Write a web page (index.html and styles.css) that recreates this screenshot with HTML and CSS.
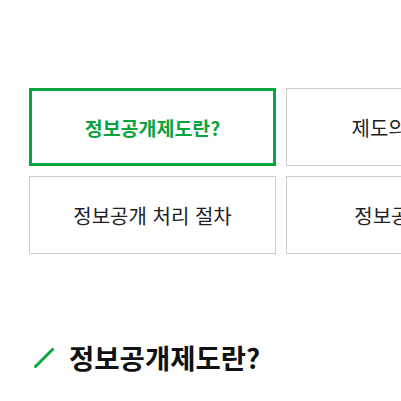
FILE: index.html
```html
<!DOCTYPE html>
<html lang="ko">
<head>
<meta charset="utf-8">
<link rel="stylesheet" href="styles.css">
</head>
<body>
<div class="page">
  <ul class="tabs">
    <li class="tab active">정보공개제도란?</li>
    <li class="tab">제도의 필요성</li>
    <li class="tab">정보공개 처리 절차</li>
    <li class="tab">정보공개청구</li>
  </ul>
  <h2 class="title">
    <svg class="slash" width="20" height="20" viewBox="0 0 20 20"><line x1="1.5" y1="18.5" x2="18.5" y2="1.5" stroke="#0aa43f" stroke-width="3" stroke-linecap="round"/></svg>
    <span>정보공개제도란?</span>
  </h2>
</div>
</body>
</html>
```
FILE: styles.css
```css
html, body {
  margin: 0;
  padding: 0;
  overflow: hidden;
  background: #fff;
}
.page {
  padding: 88px 0 0 29px;
  width: 800px;
  font-family: "Noto Sans CJK KR", "Noto Sans", sans-serif;
}
.tabs {
  list-style: none;
  margin: 0;
  padding: 0;
  display: grid;
  grid-template-columns: 247px 247px;
  grid-auto-rows: 78px;
  gap: 10px;
}
.tab {
  box-sizing: border-box;
  border: 1px solid #cccccc;
  display: flex;
  align-items: center;
  justify-content: center;
  font-size: 20px;
  color: #222;
}
.tab.active {
  border: 3px solid #0aa43f;
  color: #0aa43f;
  font-weight: 700;
  font-size: 19.5px;
}
.title {
  margin: 85px 0 0 5px;
  display: flex;
  align-items: center;
  gap: 15px;
  font-size: 27.5px;
  line-height: 36px;
  font-weight: 700;
  color: #111;
}
.slash {
  display: block;
  margin-top: 2px;
}
```
